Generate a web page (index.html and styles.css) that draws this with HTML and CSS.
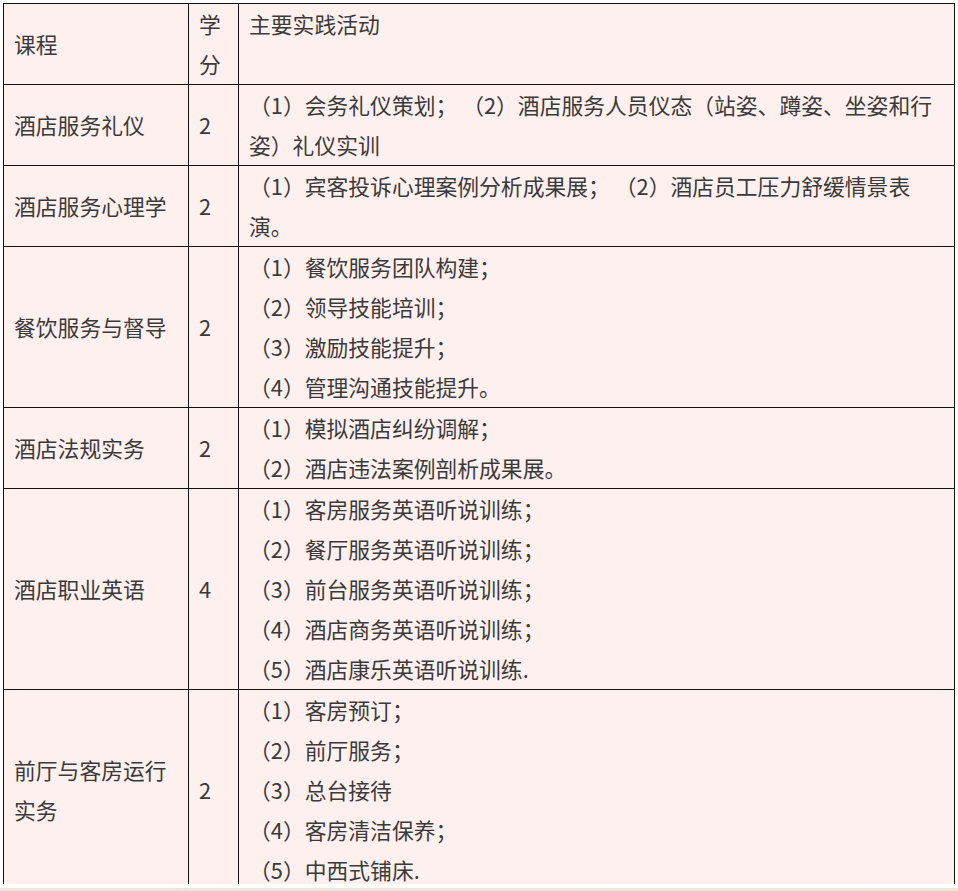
FILE: index.html
```html
<!DOCTYPE html>
<html lang="zh-CN">
<head>
<meta charset="utf-8">
<title>课程实践活动</title>
<link rel="stylesheet" href="styles.css">
</head>
<body>
<div class="page">
  <div class="clip">
    <table class="course-table">
      <colgroup>
        <col class="c-name">
        <col class="c-credit">
        <col class="c-act">
      </colgroup>
      <tbody>
        <tr>
          <td>课程</td>
          <td>学<br>分</td>
          <td class="top">主要实践活动</td>
        </tr>
        <tr>
          <td>酒店服务礼仪</td>
          <td>2</td>
          <td>（1）会务礼仪策划； （2）酒店服务人员仪态（站姿、蹲姿、坐姿和行<br>姿）礼仪实训</td>
        </tr>
        <tr>
          <td>酒店服务心理学</td>
          <td>2</td>
          <td>（1）宾客投诉心理案例分析成果展； （2）酒店员工压力舒缓情景表<br>演。</td>
        </tr>
        <tr>
          <td>餐饮服务与督导</td>
          <td>2</td>
          <td>（1）餐饮服务团队构建；<br>（2）领导技能培训；<br>（3）激励技能提升；<br>（4）管理沟通技能提升。</td>
        </tr>
        <tr>
          <td>酒店法规实务</td>
          <td>2</td>
          <td>（1）模拟酒店纠纷调解；<br>（2）酒店违法案例剖析成果展。</td>
        </tr>
        <tr>
          <td>酒店职业英语</td>
          <td>4</td>
          <td>（1）客房服务英语听说训练；<br>（2）餐厅服务英语听说训练；<br>（3）前台服务英语听说训练；<br>（4）酒店商务英语听说训练；<br>（5）酒店康乐英语听说训练.</td>
        </tr>
        <tr>
          <td>前厅与客房运行<br>实务</td>
          <td>2</td>
          <td>（1）客房预订；<br>（2）前厅服务；<br>（3）总台接待<br>（4）客房清洁保养；<br>（5）中西式铺床.</td>
        </tr>
      </tbody>
    </table>
  </div>
  <div class="strip"></div>
</div>
</body>
</html>
```

FILE: styles.css
```css
html, body {
  margin: 0;
  padding: 0;
  background: #ffffff;
}

.page {
  width: 958px;
  height: 891px;
  overflow: hidden;
  padding-top: 3px;
  box-sizing: border-box;
}

.clip {
  margin-left: 3px;
  height: 881px;
  overflow: hidden;
}

.course-table {
  width: 952px;
  table-layout: fixed;
  border-collapse: collapse;
  background: #fff0f0;
  font-family: "Noto Sans CJK SC", "Noto Sans", sans-serif;
  font-size: 21.8px;
  line-height: 40px;
  color: #3a3a3a;
}

.c-name { width: 185px; }
.c-credit { width: 50px; }
.c-act { width: 716px; }

.course-table td {
  border: 1px solid #111111;
  padding: 0 10px;
  vertical-align: middle;
  text-align: left;
}

.course-table td.top {
  vertical-align: top;
}

.strip {
  margin-top: 4px;
  height: 12px;
  background: linear-gradient(90deg, #ece6dd 0%, #e8e8dc 50%, #e2ebd8 100%);
}
```
